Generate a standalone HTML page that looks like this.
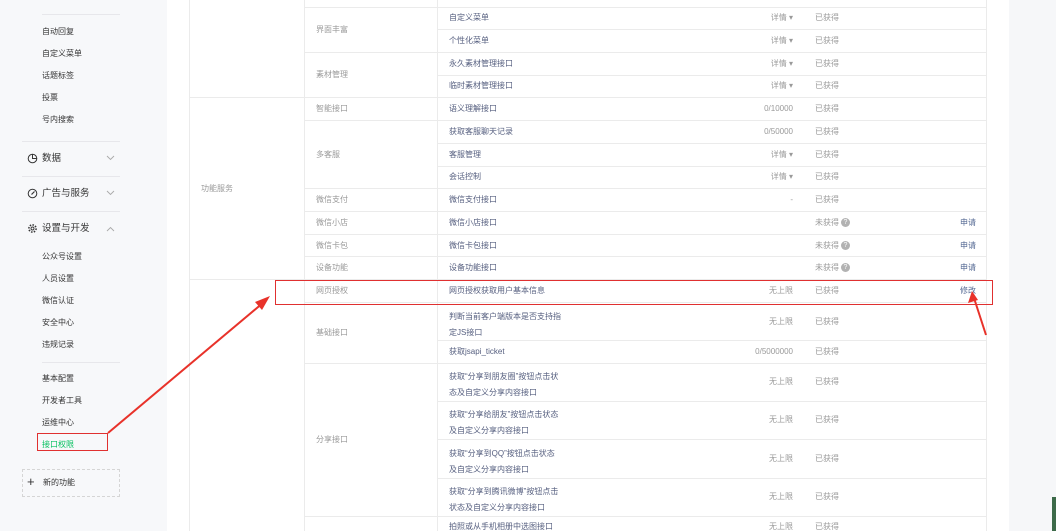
<!DOCTYPE html>
<html><head><meta charset="utf-8"><style>
*{margin:0;padding:0;box-sizing:border-box}
body{width:1056px;height:531px;overflow:hidden;background:#fff;font-family:"Liberation Sans","Noto Sans CJK SC",sans-serif;position:relative}
.a{position:absolute;white-space:nowrap}
#side{position:absolute;left:0;top:0;width:167px;height:531px;background:#f7f8fa}
.si{position:absolute;left:42px;font-size:8px;color:#353535;line-height:10px}
.hd{position:absolute;left:42px;font-size:9.5px;color:#353535;line-height:12px}
.dv{position:absolute;left:22px;width:98px;height:1px;background:#e7e7eb}
.hl{position:absolute;height:1px;background:#ebebeb}
.vl{position:absolute;width:1px;background:#ebebeb}
.t{position:absolute;font-size:8px;line-height:10px;white-space:nowrap}
.c2{color:#9a9a9a;left:316px}
.c3{color:#576080;left:449px}
.q{color:#9a9a9a;right:263px;text-align:right}
.s{color:#9a9a9a;left:815px}
.ap{color:#576b95;left:960px}
.qm{display:inline-block;width:9px;height:9px;border-radius:50%;background:#b2b2b2;color:#fff;font-size:7px;line-height:9px;text-align:center;vertical-align:middle;margin-left:2px}
</style></head><body>
<div id="side">
<div class="dv" style="top:14px;left:42px;width:78px"></div>
<div class="si" style="top:27px">自动回复</div>
<div class="si" style="top:49px">自定义菜单</div>
<div class="si" style="top:71px">话题标签</div>
<div class="si" style="top:93px">投票</div>
<div class="si" style="top:115px">号内搜索</div>
<div class="dv" style="top:141px"></div>
<svg class="a" style="left:27px;top:153px" width="11" height="11" viewBox="0 0 11 11"><circle cx="5.5" cy="5.5" r="4.3" fill="none" stroke="#353535" stroke-width="1"/><path d="M5.5 1.2V5.5H9.8" fill="none" stroke="#353535" stroke-width="1"/></svg>
<div class="hd" style="top:153px">数据</div>
<svg class="a" style="left:106px;top:155px" width="9" height="6"><path d="M1 1l3.5 3.5L8 1" fill="none" stroke="#aaa" stroke-width="0.9"/></svg>
<div class="dv" style="top:176px"></div>
<svg class="a" style="left:27px;top:188px" width="11" height="11" viewBox="0 0 11 11"><circle cx="5.5" cy="5.5" r="4.3" fill="none" stroke="#353535" stroke-width="1"/><path d="M7.5 3.5L4.5 6.5" stroke="#353535" stroke-width="1.2"/></svg>
<div class="hd" style="top:188px">广告与服务</div>
<svg class="a" style="left:106px;top:190px" width="9" height="6"><path d="M1 1l3.5 3.5L8 1" fill="none" stroke="#aaa" stroke-width="0.9"/></svg>
<div class="dv" style="top:211px"></div>
<svg class="a" style="left:27px;top:223px" width="11" height="11" viewBox="0 0 11 11"><circle cx="5.5" cy="5.5" r="3.6" fill="none" stroke="#353535" stroke-width="1.6" stroke-dasharray="1.5 1.3"/><circle cx="5.5" cy="5.5" r="1.5" fill="none" stroke="#353535" stroke-width="0.9"/></svg>
<div class="hd" style="top:223px">设置与开发</div>
<svg class="a" style="left:106px;top:226px" width="9" height="6"><path d="M1 5l3.5-3.5L8 5" fill="none" stroke="#aaa" stroke-width="0.9"/></svg>
<div class="si" style="top:252px">公众号设置</div>
<div class="si" style="top:274px">人员设置</div>
<div class="si" style="top:296px">微信认证</div>
<div class="si" style="top:318px">安全中心</div>
<div class="si" style="top:340px">违规记录</div>
<div class="dv" style="top:362px;left:42px;width:78px"></div>
<div class="si" style="top:374px">基本配置</div>
<div class="si" style="top:396px">开发者工具</div>
<div class="si" style="top:418px">运维中心</div>
<div class="si" style="top:440px;color:#07c160">接口权限</div>
<div class="a" style="left:22px;top:469px;width:98px;height:28px;border:1px dashed #d5d5d5"></div>
<div class="a" style="left:27px;top:475px;font-size:13px;line-height:14px;color:#353535">+</div>
<div class="si" style="top:478px;left:43px">新的功能</div>
</div>
<div class="a" style="left:1009px;top:0;width:47px;height:531px;background:#f6f7f9"></div>
<div class="a" style="left:1052px;top:497px;width:4px;height:34px;background:#3d6b4a"></div>

<!-- table lines -->
<div class="vl" style="left:189px;top:0;height:531px"></div>
<div class="vl" style="left:304px;top:0;height:531px"></div>
<div class="vl" style="left:437px;top:0;height:531px"></div>
<div class="vl" style="left:986px;top:0;height:531px"></div>
<div class="hl" style="left:304px;width:682px;top:7px"></div>
<div class="hl" style="left:437px;width:549px;top:29px"></div>
<div class="hl" style="left:304px;width:682px;top:52px"></div>
<div class="hl" style="left:437px;width:549px;top:75px"></div>
<div class="hl" style="left:189px;width:797px;top:97px"></div>
<div class="hl" style="left:304px;width:682px;top:120px"></div>
<div class="hl" style="left:437px;width:549px;top:143px"></div>
<div class="hl" style="left:437px;width:549px;top:166px"></div>
<div class="hl" style="left:304px;width:682px;top:188px"></div>
<div class="hl" style="left:304px;width:682px;top:211px"></div>
<div class="hl" style="left:304px;width:682px;top:234px"></div>
<div class="hl" style="left:304px;width:682px;top:256px"></div>
<div class="hl" style="left:189px;width:797px;top:279px"></div>
<div class="hl" style="left:304px;width:682px;top:302px"></div>
<div class="hl" style="left:437px;width:549px;top:340px"></div>
<div class="hl" style="left:304px;width:682px;top:363px"></div>
<div class="hl" style="left:437px;width:549px;top:401px"></div>
<div class="hl" style="left:437px;width:549px;top:439px"></div>
<div class="hl" style="left:437px;width:549px;top:478px"></div>
<div class="hl" style="left:304px;width:682px;top:516px"></div>

<div class="t" style="left:201px;top:184px;color:#9a9a9a">功能服务</div>
<div class="t c2" style="top:25px">界面丰富</div>
<div class="t c2" style="top:70px">素材管理</div>
<div class="t c2" style="top:104px">智能接口</div>
<div class="t c2" style="top:150px">多客服</div>
<div class="t c2" style="top:195px">微信支付</div>
<div class="t c2" style="top:218px">微信小店</div>
<div class="t c2" style="top:241px">微信卡包</div>
<div class="t c2" style="top:263px">设备功能</div>
<div class="t c2" style="top:286px">网页授权</div>
<div class="t c2" style="top:328px">基础接口</div>
<div class="t c2" style="top:435px">分享接口</div>

<div class="t c3" style="top:13px">自定义菜单</div>
<div class="t c3" style="top:36px">个性化菜单</div>
<div class="t c3" style="top:59px">永久素材管理接口</div>
<div class="t c3" style="top:81px">临时素材管理接口</div>
<div class="t c3" style="top:104px">语义理解接口</div>
<div class="t c3" style="top:127px">获取客服聊天记录</div>
<div class="t c3" style="top:150px">客服管理</div>
<div class="t c3" style="top:172px">会话控制</div>
<div class="t c3" style="top:195px">微信支付接口</div>
<div class="t c3" style="top:218px">微信小店接口</div>
<div class="t c3" style="top:241px">微信卡包接口</div>
<div class="t c3" style="top:263px">设备功能接口</div>
<div class="t c3" style="top:286px">网页授权获取用户基本信息</div>
<div class="t c3" style="top:309px;line-height:15.5px">判断当前客户端版本是否支持指<br>定JS接口</div>
<div class="t c3" style="top:347px">获取jsapi_ticket</div>
<div class="t c3" style="top:369px;line-height:15.5px">获取“分享到朋友圈”按钮点击状<br>态及自定义分享内容接口</div>
<div class="t c3" style="top:407px;line-height:15.5px">获取“分享给朋友”按钮点击状态<br>及自定义分享内容接口</div>
<div class="t c3" style="top:446px;line-height:15.5px">获取“分享到QQ”按钮点击状态<br>及自定义分享内容接口</div>
<div class="t c3" style="top:484px;line-height:15.5px">获取“分享到腾讯微博”按钮点击<br>状态及自定义分享内容接口</div>
<div class="t c3" style="top:522px">拍照或从手机相册中选图接口</div>

<div class="t q" style="top:13px">详情 ▾</div>
<div class="t q" style="top:36px">详情 ▾</div>
<div class="t q" style="top:59px">详情 ▾</div>
<div class="t q" style="top:81px">详情 ▾</div>
<div class="t q" style="top:104px;right:263px">0/10000</div>
<div class="t q" style="top:127px">0/50000</div>
<div class="t q" style="top:150px">详情 ▾</div>
<div class="t q" style="top:172px">详情 ▾</div>
<div class="t q" style="top:195px">-</div>
<div class="t q" style="top:286px">无上限</div>
<div class="t q" style="top:317px">无上限</div>
<div class="t q" style="top:347px">0/5000000</div>
<div class="t q" style="top:377px">无上限</div>
<div class="t q" style="top:415px">无上限</div>
<div class="t q" style="top:454px">无上限</div>
<div class="t q" style="top:492px">无上限</div>
<div class="t q" style="top:522px">无上限</div>

<div class="t s" style="top:13px">已获得</div>
<div class="t s" style="top:36px">已获得</div>
<div class="t s" style="top:59px">已获得</div>
<div class="t s" style="top:81px">已获得</div>
<div class="t s" style="top:104px">已获得</div>
<div class="t s" style="top:127px">已获得</div>
<div class="t s" style="top:150px">已获得</div>
<div class="t s" style="top:172px">已获得</div>
<div class="t s" style="top:195px">已获得</div>
<div class="t s" style="top:218px">未获得<span class="qm">?</span></div>
<div class="t s" style="top:241px">未获得<span class="qm">?</span></div>
<div class="t s" style="top:263px">未获得<span class="qm">?</span></div>
<div class="t s" style="top:286px">已获得</div>
<div class="t s" style="top:317px">已获得</div>
<div class="t s" style="top:347px">已获得</div>
<div class="t s" style="top:377px">已获得</div>
<div class="t s" style="top:415px">已获得</div>
<div class="t s" style="top:454px">已获得</div>
<div class="t s" style="top:492px">已获得</div>
<div class="t s" style="top:522px">已获得</div>

<div class="t ap" style="top:218px">申请</div>
<div class="t ap" style="top:241px">申请</div>
<div class="t ap" style="top:263px">申请</div>
<div class="t ap" style="top:286px">修改</div>

<!-- red annotations -->
<div class="a" style="left:275px;top:280px;width:718px;height:25px;border:1.5px solid #e03030"></div>
<div class="a" style="left:37px;top:433px;width:71px;height:18px;border:1.5px solid #e03030"></div>
<svg class="a" style="left:0;top:0" width="1056" height="531">
<path d="M108 433 L264 302" stroke="#e8322a" stroke-width="2"/>
<path d="M270 296 L255 302 L262 310 Z" fill="#e8322a"/>
<path d="M986 335 L974 298" stroke="#e8322a" stroke-width="2"/>
<path d="M972 291 L968 303 L978 300 Z" fill="#e8322a"/>
</svg>
</body></html>
